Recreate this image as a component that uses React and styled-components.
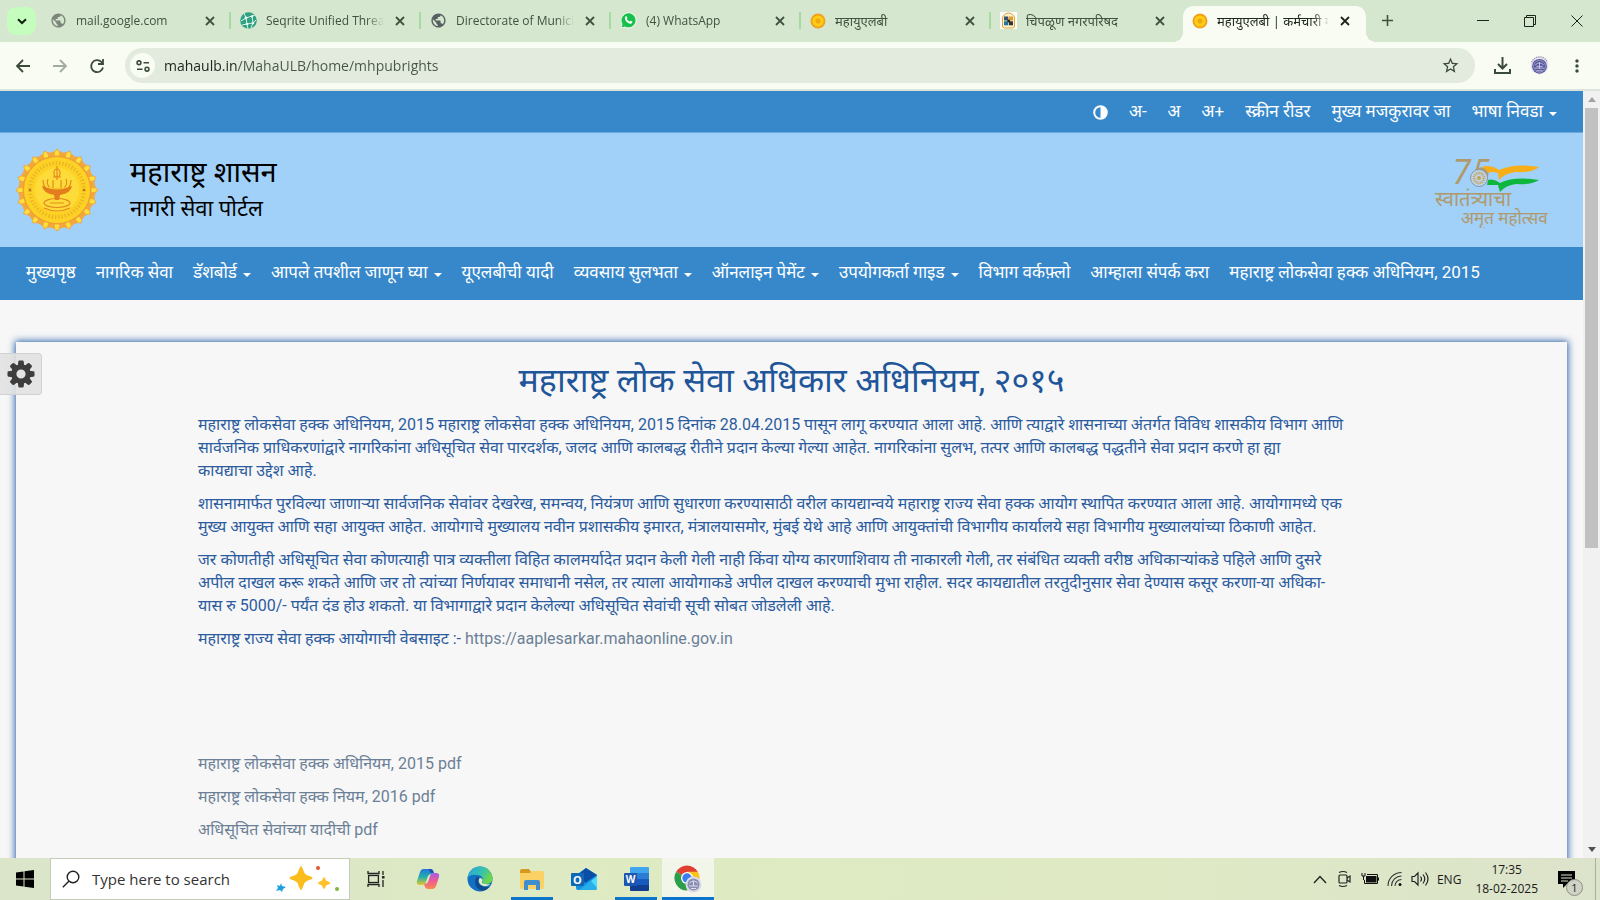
import { MdPublic, MdStarBorder, MdMoreVert, MdAdd } from "react-icons/md";
import styled, { createGlobalStyle, css } from "styled-components";

const GlobalStyle = createGlobalStyle`
  * {
    box-sizing: border-box;
  }
  body {
    margin: 0;
    font-family: Roboto, "Noto Sans Devanagari", "Noto Sans", sans-serif;
  }
  button {
    border: none;
    background: none;
    padding: 0;
    font: inherit;
    color: inherit;
    cursor: pointer;
  }
  a {
    text-decoration: none;
    color: inherit;
  }
  svg {
    display: block;
    flex-shrink: 0;
  }
`;

const uiFont = `"Open Sans", "Noto Sans Devanagari", "Noto Sans", sans-serif`;

const Window = styled.div`
  height: 100vh;
  display: flex;
  flex-direction: column;
  overflow: hidden;
`;

/* ---------- browser ---------- */

const TabStrip = styled.div`
  display: flex;
  align-items: flex-end;
  height: 42px;
  padding-left: 7px;
  background-color: #d5e7cf;
  font-family: ${uiFont};
  color: #43513f;
`;

const TabSearch = styled.button`
  display: flex;
  align-items: center;
  justify-content: center;
  width: 29px;
  height: 28px;
  margin-bottom: 7px;
  border-radius: 9px;
  background-color: #c4fdbe;
  color: #102010;
`;

const TabItem = styled.div`
  flex: 0 1 190px;
  min-width: 0;
  height: 36px;
  display: flex;
  align-items: center;
  gap: 9px;
  padding: 0 14px 7px 9px;
  position: relative;
  ${(props) =>
    !props.$last &&
    css`
      &::after {
        content: "";
        position: absolute;
        right: 0;
        top: 6px;
        width: 2px;
        height: 17px;
        background-color: #a5dba0;
      }
    `}
  ${(props) =>
    props.$active &&
    css`
      flex-basis: 183px;
      margin-left: 2px;
      border-radius: 10px 10px 0 0;
      background-color: #f8fcf3;
      color: #1c241b;
      &::before,
      &::after {
        content: "";
        position: absolute;
        bottom: 0;
        top: auto;
        width: 10px;
        height: 10px;
        background: radial-gradient(circle at 0 0, transparent 10px, #f8fcf3 10px);
      }
      &::before {
        left: -10px;
      }
      &::after {
        right: -10px;
        background: radial-gradient(circle at 100% 0, transparent 10px, #f8fcf3 10px);
      }
    `}
`;

const Tabs = styled.div`
  display: flex;
  flex: 1;
  min-width: 0;
  padding-left: 5px;
`;

const TabTitle = styled.button`
  flex: 1;
  min-width: 0;
  height: 24px;
  font-size: ${(props) => (props.$marathi ? "13px" : "12px")};
  line-height: 24px;
  text-align: left;
  white-space: nowrap;
  overflow: hidden;
  mask-image: linear-gradient(to right, #000 85%, transparent 100%);
`;

const TabClose = styled.button`
  flex-shrink: 0;
  padding: 2px;
`;

const NewTab = styled.button`
  height: 28px;
  margin-left: 12px;
`;

const WindowButtons = styled.div`
  display: flex;
  height: 42px;
  color: #1c241b;
`;

const WindowButton = styled.button`
  width: 47px;
  display: flex;
  align-items: center;
  justify-content: center;
`;

const Toolbar = styled.div`
  display: flex;
  align-items: center;
  height: 49px;
  padding: 0 13px 0 14px;
  background-color: #f8fcf3;
  border-bottom: 2px solid #dce3dc;
  color: #3c4a3a;
`;

const NavButtons = styled.div`
  display: flex;
  gap: 19px;
  margin-right: 19px;
`;

const ToolButton = styled.button`
  opacity: ${(props) => (props.disabled ? 0.45 : 1)};
`;

const AddressBar = styled.div`
  flex: 1;
  display: flex;
  align-items: center;
  gap: 9px;
  height: 35px;
  padding: 0 15px 0 5px;
  border-radius: 18px;
  background-color: #e3ebdf;
`;

const SiteInfo = styled.button`
  display: flex;
  align-items: center;
  justify-content: center;
  width: 25px;
  height: 25px;
  border-radius: 50%;
  background-color: #f8fcf3;
`;

const AddressInput = styled.input`
  flex: 1;
  min-width: 0;
  border: none;
  outline: none;
  padding: 0;
  font-family: ${uiFont};
  font-size: 14px;
  line-height: 24px;
  color: transparent;
  caret-color: #1c241b;
  /* host is darker than the path */
  background: linear-gradient(to right, #1c241b 73px, #485546 73px);
  background-clip: text;
`;

const ToolbarEnd = styled.div`
  display: flex;
  align-items: center;
  gap: 18px;
  margin-left: 18px;
`;

/* ---------- web page ---------- */

const Viewport = styled.div`
  flex: 1;
  min-height: 0;
  display: flex;
`;

const Page = styled.div`
  flex: 1;
  min-width: 0;
  overflow: hidden;
  position: relative;
  background-color: #f7f7f7;
`;

const Scrollbar = styled.div`
  width: 17px;
  display: flex;
  flex-direction: column;
  align-items: center;
  justify-content: space-between;
  background-color: #f1f1f1;
`;

const ScrollArrow = styled.button`
  width: 17px;
  height: 17px;
  display: flex;
  align-items: center;
  justify-content: center;
`;

const ScrollTrack = styled.div`
  flex: 1;
  width: 13px;
`;

const ScrollThumb = styled.div`
  height: 60%;
  background-color: #c1c1c1;
`;

const AccessBar = styled.div`
  display: flex;
  align-items: center;
  justify-content: flex-end;
  gap: 21px;
  height: 42px;
  padding: 2px 26px 0 0;
  background-color: #3788cb;
  border-bottom: 1px solid #6aa9de;
  color: #fff;
  font-size: 17px;
`;

const Header = styled.header`
  display: flex;
  align-items: center;
  height: 114px;
  padding: 0 31px 0 15px;
  background-color: #a1d0f9;
`;

const Brand = styled.div`
  flex: 1;
  margin-left: 31px;
  color: #000;
`;

const BrandTitle = styled.div`
  font-size: 29px;
  line-height: 38px;
`;

const BrandSubtitle = styled.div`
  font-size: 22px;
  line-height: 36px;
`;

const Menu = styled.nav`
  display: flex;
  align-items: center;
  gap: 20px;
  height: 53px;
  padding: 0 26px;
  background-color: #3788cb;
  color: #fff;
  font-size: 17px;
  white-space: nowrap;
`;

const MenuLink = styled.a`
  display: flex;
  align-items: center;
  gap: 6px;
`;

const Caret = styled.span`
  border-top: 4px solid currentColor;
  border-left: 4px solid transparent;
  border-right: 4px solid transparent;
  margin-top: 2px;
`;

const Card = styled.main`
  margin: 42px 16px 0;
  min-height: 100%;
  padding: 14px 182px 0;
  background-color: #f7f7f7;
  box-shadow: 0 0 7px 1px #2a62a8;
`;

const Heading = styled.h1`
  margin: 0 0 9px;
  font-size: 34px;
  font-weight: 400;
  line-height: 48px;
  text-align: center;
  color: #1f5599;
`;

const Paragraph = styled.p`
  margin: 0 0 10px;
  font-size: 16px;
  line-height: 23px;
  color: #2b5c9f;
  white-space: nowrap;
`;

const SiteLink = styled.a`
  color: #6b7f96;
`;

const Downloads = styled.ul`
  list-style: none;
  margin: 102px 0 0;
  padding: 0;
  font-size: 16px;
  line-height: 23px;
  color: #6b7f96;
`;

const Download = styled.li`
  margin-bottom: 10px;
`;

const Settings = styled.button`
  position: absolute;
  left: 0;
  top: 262px;
  display: flex;
  align-items: center;
  justify-content: center;
  width: 42px;
  height: 42px;
  border: 1px solid #d2d2d2;
  border-left: none;
  border-radius: 0 4px 4px 0;
  background-color: rgba(225, 225, 225, 0.9);
  color: #3d3d3d;
`;

/* ---------- taskbar ---------- */

const Taskbar = styled.div`
  display: flex;
  align-items: stretch;
  height: 42px;
  background: linear-gradient(to right, #dae5ca, #deebc2 40%, #dfeac4 70%, #dce3cb);
  font-family: ${uiFont};
  color: #1a1a1a;
`;

const StartButton = styled.button`
  width: 50px;
  display: flex;
  align-items: center;
  justify-content: center;
`;

const SearchBox = styled.label`
  width: 300px;
  display: flex;
  align-items: center;
  gap: 12px;
  padding: 0 8px 0 11px;
  border: 1px solid #c4cbb8;
  background-color: #fff;
`;

const SearchInput = styled.input`
  flex: 1;
  min-width: 0;
  border: none;
  outline: none;
  padding: 0;
  font-family: ${uiFont};
  font-size: 15px;
  &::placeholder {
    color: #333;
    opacity: 1;
  }
`;

const Apps = styled.div`
  display: flex;
  flex: 1;
`;

const AppButton = styled.button`
  position: relative;
  width: 52px;
  display: flex;
  align-items: center;
  justify-content: center;
  background-color: ${(props) => (props.$active ? "#f2f5e9" : "transparent")};
  ${(props) =>
    props.$open &&
    css`
      &::after {
        content: "";
        position: absolute;
        left: ${props.$active ? "0" : "5px"};
        right: ${props.$active ? "0" : "5px"};
        bottom: 0;
        height: 3px;
        background-color: #0b74cc;
      }
    `}
`;

const Tray = styled.div`
  display: flex;
  align-items: center;
  gap: 8px;
  font-size: 12px;
`;

const TrayButton = styled.button`
  line-height: 19px;
  text-align: center;
`;

const Clock = styled(TrayButton)`
  margin: 0 12px 0 6px;
`;

const Notifications = styled(TrayButton)`
  position: relative;
  margin-right: 12px;
`;

const Badge = styled.span`
  position: absolute;
  left: 8px;
  top: 8px;
  width: 17px;
  height: 17px;
  border: 1px solid #8a8f80;
  border-radius: 50%;
  background-color: #cfd3c5;
  font-size: 11px;
  line-height: 15px;
`;

const ShowDesktop = styled.div`
  align-self: stretch;
  width: 5px;
  border-left: 1px solid #a9b09b;
`;

/* ---------- drawings ---------- */

const Seqrite = () => (
  <svg width="17" height="17" viewBox="0 0 17 17">
    <circle cx="8.5" cy="8.5" r="8.3" fill="#2ea183" />
    <g stroke="#d8f0e4" strokeWidth="1" fill="none">
      <path d="M4 1 6 6 1 9M6 6l6-2 3-1M6 6l1 6 6-1 3-3M12 4l1 7-2 5M7 12l-5 1M7 12l1 5" />
    </g>
    <g fill="#e8f8f0">
      <circle cx="6" cy="6" r="1.4" />
      <circle cx="12" cy="4.4" r="1.2" />
      <circle cx="7" cy="12" r="1.3" />
      <circle cx="13" cy="11" r="1.3" />
    </g>
  </svg>
);

const WhatsApp = () => (
  <svg width="17" height="17" viewBox="0 0 17 17">
    <path d="M0.5 16.5 1.7 12.4A8 8 0 1 1 4.7 15.4Z" fill="#edf9ea" />
    <path d="M1.7 15.3 2.6 12.1A7 7 0 1 1 5 14.4Z" fill="#17bf4b" />
    <path
      d="M5.5 4.6c.7-.8 1.3-.4 1.5.3l.4 1c.1.4-.6.8-.6 1.1.6 1.2 1.5 2 2.8 2.6.4 0 .7-.9 1.1-.8l1.5.8c.4.4 0 1.4-.7 1.8-1.2.7-3 .1-4.6-1.3-1.7-1.5-2.6-3.9-1.4-5.5Z"
      fill="#fff"
    />
  </svg>
);

const Coin = () => (
  <svg width="16" height="16" viewBox="0 0 16 16">
    <circle cx="8" cy="8" r="7.5" fill="#f3a21f" />
    <circle cx="8" cy="8" r="5.6" fill="#fdcd12" />
    <circle cx="8" cy="8" r="2.5" fill="#f2a616" />
  </svg>
);

const Council = () => (
  <svg width="17" height="17" viewBox="0 0 17 17">
    <rect width="17" height="17" fill="#fdfcf8" />
    <path d="M2.5 15V6Q3 2 8.5 1 14 2 14.5 6v9l-2 1h-8Z" fill="#fff3cf" stroke="#e2a13a" />
    <rect x="4" y="4.5" width="4.3" height="4" fill="#35506d" />
    <rect x="9" y="4.5" width="4" height="4" fill="#e09a28" />
    <rect x="4" y="9.3" width="4.3" height="4" fill="#1d74a0" />
    <rect x="9" y="9.3" width="4" height="4" fill="#33382f" />
    <circle cx="8.7" cy="9" r="1.5" fill="#2a2418" />
  </svg>
);

const Seal = ({ size }) => (
  <svg width={size} height={size} viewBox="0 0 18 18">
    <circle cx="9" cy="9" r="8.5" fill="#e4e4f0" />
    <path d="M1.5 6a8 8 0 0 1 15 0" fill="none" stroke="#9a8fb4" strokeWidth="1.2" strokeDasharray="1.2 .9" />
    <circle cx="9" cy="9.8" r="7" fill="#54549a" />
    <circle cx="9" cy="9.8" r="5.6" fill="none" stroke="#a9a9d0" strokeWidth=".7" />
    <path d="M5 8.5q4-4 8 0M4.5 11.5h9M6 14h6M9 6v6M6 9.8h6" stroke="#d6d6ec" fill="none" strokeWidth=".8" />
  </svg>
);

const Contrast = () => (
  <svg width="15" height="15" viewBox="0 0 15 15">
    <circle cx="7.5" cy="7.5" r="6.3" fill="none" stroke="#fff" strokeWidth="2" />
    <path d="M7.5 1.5a6 6 0 0 1 0 12Z" fill="#fff" />
  </svg>
);

const Gear = () => (
  <svg width="28" height="28" viewBox="0 0 28 28">
    {Array.from({ length: 8 }, (_, i) => (
      <path
        key={i}
        d="M10.8 6 11.3 1.5Q11.4.5 12.4.5H15.6Q16.6.5 16.7 1.5L17.2 6Z"
        fill="currentColor"
        transform={`rotate(${i * 45} 14 14)`}
      />
    ))}
    <circle cx="14" cy="14" r="7.2" fill="none" stroke="currentColor" strokeWidth="5.2" />
  </svg>
);

const Emblem = () => (
  <svg width="84" height="84" viewBox="0 0 84 84" role="img" aria-label="महाराष्ट्र शासन">
    {Array.from({ length: 20 }, (_, i) => (
      <g key={i} transform={`rotate(${i * 18} 42 42)`}>
        <path d="M35 8Q35 3.5 39 3.5L42 .5 45 3.5Q49 3.5 49 8V14H35Z" fill="#f2a83c" />
        <ellipse cx="42" cy="5.8" rx="2.1" ry="3.6" fill="#fde03c" />
      </g>
    ))}
    <circle cx="42" cy="42" r="34.5" fill="#f0a035" />
    <circle cx="42" cy="42" r="33" fill="#fdd224" />
    <circle cx="42" cy="42" r="27" fill="none" stroke="#dfa02a" strokeWidth="4" strokeDasharray="1.5 1.8" opacity=".55" />
    <circle cx="42" cy="42" r="22" fill="#fddc3a" />
    <circle cx="15" cy="42" r="1.3" fill="#b9791b" />
    <circle cx="69" cy="42" r="1.3" fill="#b9791b" />
    <g fill="none" stroke="#e58a22" strokeWidth="1.2">
      <ellipse cx="42" cy="25" rx="3" ry="4" />
      <path d="M42 18v14M38 29h8" />
      <path d="M28 32q0 6 4 9M56 32q0 6-4 9M33 31q-2 5 2 9M51 31q2 5-2 9M38 32v8M46 32v8" />
      <ellipse cx="42" cy="55" rx="13" ry="4.5" />
      <path d="M29 60q13 6 26 0M35 55h14" />
    </g>
    <path d="M27 38Q42 43 57 38 56 45 45 47L44 52H40L39 47Q28 45 27 38Z" fill="#e37d1d" />
    <path d="M31 39Q42 43 53 39" stroke="#fdd224" fill="none" />
  </svg>
);

const AmritLogo = () => (
  <svg width="118" height="76" viewBox="0 0 118 76" role="img" aria-label="स्वातंत्र्याचा अमृत महोत्सव">
    <g fill="#b09a6b" fontFamily='"Noto Sans Devanagari", "Noto Sans", sans-serif'>
      <text x="18" y="32" fontSize="34" fontStyle="italic" fontFamily="Lato, sans-serif">
        75
      </text>
      <text x="1" y="54" fontSize="20">
        स्वातंत्र्याचा
      </text>
      <text x="27" y="72" fontSize="17">
        अमृत महोत्सव
      </text>
    </g>
    <circle cx="45" cy="26" r="8.5" fill="#bcd3e8" stroke="#8a98a8" />
    <circle cx="45" cy="26" r="5" fill="none" stroke="#c9a24f" strokeWidth="2.5" strokeDasharray="1 .8" />
    <circle cx="45" cy="26" r="2" fill="#c9a24f" />
    <path d="M48 15Q56 12 65 18 82 11 105 15 98 21 82 20 71 21 65 28L64 21Q58 19 54 21 52 17 48 15Z" fill="#f7ae17" />
    <path d="M54 28Q60 26 66 31 80 24 105 28 98 33 82 32 72 33 66 40L64 33H53Z" fill="#0eb63e" />
  </svg>
);

const Sparkles = () => (
  <svg width="66" height="28" viewBox="0 0 66 28">
    <path
      d="M26 1Q27 1 29 7 30 10 36 11.5 39 13 36 14.5 30 16 29 19 27 25 26 25T23 19Q22 16 16 14.5 13 13 16 11.5 22 10 23 7 25 1 26 1Z"
      fill="#fbbd1b"
    />
    <path
      d="M49 12Q50 12 51 15.5 55 17 55.5 18 55 19 51 20.5 50 24 49 24T47 20.5Q43 19 43 18T47 15.5Q48 12 49 12Z"
      fill="#fcc12b"
    />
    <path d="M6 18l1 3 4 1-3 2-1 3-2-2-4 1 2-3-1-3 3 1Z" fill="#1ba1e2" />
    <circle cx="43" cy="3" r="2" fill="#e4572e" />
    <circle cx="62" cy="24" r="2" fill="#7cb93e" />
  </svg>
);

const TaskView = () => (
  <svg width="19" height="18" viewBox="0 0 19 18" fill="none" stroke="#222" strokeWidth="1.3">
    <path d="M1 1v2.5h11V1M1 17v-2.5h11V17" />
    <rect x="1.6" y="5.5" width="9.8" height="7" />
    <path d="M16 1v4M16 10v7" />
    <rect x="15" y="6" width="2.5" height="2.5" fill="#222" stroke="none" />
  </svg>
);

const Copilot = () => (
  <svg width="24" height="24" viewBox="0 0 24 24">
    <defs>
      <linearGradient id="cpA" x1="0" y1="0" x2="0" y2="1">
        <stop offset="0" stopColor="#2276d9" />
        <stop offset=".5" stopColor="#22b0a8" />
        <stop offset="1" stopColor="#e9c62a" />
      </linearGradient>
      <linearGradient id="cpB" x1="0" y1="0" x2="0" y2="1">
        <stop offset="0" stopColor="#a25be6" />
        <stop offset=".5" stopColor="#ee5d92" />
        <stop offset="1" stopColor="#f78a4a" />
      </linearGradient>
    </defs>
    <path d="M16 7 15 4Q14 2 12 2H7Q5 2 4 5L1 14Q0 18 4 18H7Q9 18 10 15L12 9Q13 7 16 7Z" fill="url(#cpA)" />
    <path d="M12 2h3q2 0 3 4H15Z" fill="#1d4fb8" />
    <path d="M8 17l1 3q1 2 3 2h5q2 0 3-3l3-9Q24 6 20 6H17Q15 6 14 9l-2 6Q11 17 8 17Z" fill="url(#cpB)" />
  </svg>
);

const Edge = () => (
  <svg width="26" height="26" viewBox="0 0 26 26">
    <defs>
      <linearGradient id="edA" x1="0" y1="0" x2="1" y2=".4">
        <stop offset="0" stopColor="#2aa6e0" />
        <stop offset=".6" stopColor="#35c1b0" />
        <stop offset="1" stopColor="#6fd64b" />
      </linearGradient>
    </defs>
    <circle cx="13" cy="13" r="12.5" fill="#1270c2" />
    <path d="M.6 12A12.5 12.5 0 0 1 25.5 12Q25.5 18 19 18 14 18 15.5 15 17 10 11 9 3 8 .6 12Z" fill="url(#edA)" />
    <path d="M9 12Q6 20 13 24 18 26 22.5 21 14 22 11.5 17 10.5 14 12.5 11.5 10 10.5 9 12Z" fill="#114a8b" />
    <path d="M12.5 12Q10.5 16 14 19 18 21.5 23.5 18.5 20 18.5 16 17.5 14 16.5 15.5 15 16 12 12.5 12Z" fill="#e3ecc9" />
  </svg>
);

const Explorer = () => (
  <svg width="24" height="21" viewBox="0 0 24 21">
    <path d="M0 2Q0 0 2 0h7l2 3v4H0Z" fill="#d39a1e" />
    <path d="M0 4h10l2-2h10q2 0 2 2v14q0 2-2 2H2q-2 0-2-2Z" fill="#fbd064" />
    <path d="M4 21v-8q0-2 2-2h12q2 0 2 2v8h-4v-5H8v5Z" fill="#3f8fd0" />
  </svg>
);

const Outlook = () => (
  <svg width="26" height="24" viewBox="0 0 26 24">
    <path d="M5 8 15 1 26 8v13q0 2-2 2H7q-2 0-2-2Z" fill="#1490df" />
    <path d="M9 6 15 1l11 7-12 8Z" fill="#0a4fa3" />
    <path d="M26 9v12q0 2-2 2H9Z" fill="#50d9ff" />
    <path d="M8 23 20 14l6 7q0 2-2 2Z" fill="#28afea" />
    <rect y="6" width="13" height="13" rx="1" fill="#0f67b8" />
    <text x="6.5" y="16.5" fontSize="11" fontWeight="700" fill="#fff" textAnchor="middle">
      O
    </text>
  </svg>
);

const Word = () => (
  <svg width="25" height="24" viewBox="0 0 25 24">
    <path d="M6 1Q6 0 7 0h17q1 0 1 1v5H6Z" fill="#41a5ee" />
    <path d="M6 6h19v6H6Z" fill="#2b7cd3" />
    <path d="M6 12h19v6H6Z" fill="#185abd" />
    <path d="M6 18h19v5q0 1-1 1H7q-1 0-1-1Z" fill="#103f91" />
    <rect y="6" width="13" height="13" rx="1" fill="#1b56b0" />
    <text x="6.5" y="16" fontSize="10" fontWeight="700" fill="#fff" textAnchor="middle">
      W
    </text>
  </svg>
);

const Chrome = () => (
  <svg width="28" height="28" viewBox="0 0 28 28">
    <path d="M13 13 2.2 6.7A12.5 12.5 0 0 1 23.8 6.7Z" fill="#e0402f" />
    <path d="M13 13 2.2 6.7A12.5 12.5 0 0 0 13 25.5Z" fill="#2b9e4a" />
    <path d="M13 13V25.5A12.5 12.5 0 0 0 23.8 6.7H13Z" fill="#fbc21c" />
    <circle cx="13" cy="13" r="6" fill="#fff" />
    <circle cx="13" cy="13" r="4.7" fill="#3b7ded" />
    <circle cx="19.5" cy="19.5" r="8" fill="#d9dae6" />
    <circle cx="19.5" cy="19.5" r="6" fill="#8a8db4" />
    <path d="M15.5 18q4-4 8 0M15 21h9M17 23.5h5M19.5 16v5" stroke="#dddfee" fill="none" />
  </svg>
);

const tabs = [
  { title: "mail.google.com", icon: <MdPublic size={17} color="#7d857b" /> },
  { title: "Seqrite Unified Threat", icon: <Seqrite /> },
  { title: "Directorate of Municipal", icon: <MdPublic size={17} color="#585f62" /> },
  { title: "(4) WhatsApp", icon: <WhatsApp /> },
  { title: "महायुएलबी", marathi: true, icon: <Coin /> },
  { title: "चिपळूण नगरपरिषद", marathi: true, icon: <Council />, last: true },
  { title: "महायुएलबी | कर्मचारी माहिती", marathi: true, icon: <Coin />, active: true, last: true },
];

const menu = [
  { label: "मुख्यपृष्ठ" },
  { label: "नागरिक सेवा" },
  { label: "डॅशबोर्ड", caret: true },
  { label: "आपले तपशील जाणून घ्या", caret: true },
  { label: "यूएलबीची यादी" },
  { label: "व्यवसाय सुलभता", caret: true },
  { label: "ऑनलाइन पेमेंट", caret: true },
  { label: "उपयोगकर्ता गाइड", caret: true },
  { label: "विभाग वर्कफ़्लो" },
  { label: "आम्हाला संपर्क करा" },
  { label: "महाराष्ट्र लोकसेवा हक्क अधिनियम, 2015" },
];

const downloads = [
  "महाराष्ट्र लोकसेवा हक्क अधिनियम, 2015 pdf",
  "महाराष्ट्र लोकसेवा हक्क नियम, 2016 pdf",
  "अधिसूचित सेवांच्या यादीची pdf",
];

const Browser = () => (
  <>
    <TabStrip>
      <TabSearch aria-label="Search tabs">
        <svg width="10" height="7" viewBox="0 0 10 7">
          <path d="M1 1.2 5 5 9 1.2" fill="none" stroke="currentColor" strokeWidth="2" />
        </svg>
      </TabSearch>
      <Tabs>
        {tabs.map((tab, i) => (
          <TabItem key={i} $active={tab.active} $last={tab.last}>
            {tab.icon}
            <TabTitle $marathi={tab.marathi}>{tab.title}</TabTitle>
            <TabClose aria-label="Close tab">
              <svg width="10" height="10" viewBox="0 0 10 10">
                <path d="M1 1l8 8M9 1L1 9" stroke="currentColor" strokeWidth="1.8" />
              </svg>
            </TabClose>
          </TabItem>
        ))}
        <NewTab aria-label="New tab">
          <MdAdd size={19} />
        </NewTab>
      </Tabs>
      <WindowButtons>
        <WindowButton aria-label="Minimize">
          <svg width="12" height="12" viewBox="0 0 12 12">
            <path d="M0 5.5h12" stroke="currentColor" />
          </svg>
        </WindowButton>
        <WindowButton aria-label="Restore">
          <svg width="12" height="12" viewBox="0 0 12 12" fill="none" stroke="currentColor">
            <path d="M.5 2.5h9v9h-9ZM2.5 2.5v-2h9v9h-2" />
          </svg>
        </WindowButton>
        <WindowButton aria-label="Close">
          <svg width="12" height="12" viewBox="0 0 12 12">
            <path d="M.5.5l11 11M11.5.5l-11 11" stroke="currentColor" />
          </svg>
        </WindowButton>
      </WindowButtons>
    </TabStrip>
    <Toolbar>
      <NavButtons>
        <ToolButton aria-label="Back">
          <svg width="18" height="18" viewBox="0 0 18 18">
            <path d="M9 3 3 9l6 6M3 9h13" fill="none" stroke="currentColor" strokeWidth="1.8" />
          </svg>
        </ToolButton>
        <ToolButton aria-label="Forward" disabled>
          <svg width="18" height="18" viewBox="0 0 18 18">
            <path d="M9 3l6 6-6 6M15 9H2" fill="none" stroke="currentColor" strokeWidth="1.8" />
          </svg>
        </ToolButton>
        <ToolButton aria-label="Reload">
          <svg width="18" height="18" viewBox="0 0 18 18">
            <path d="M15 10.5A6 6 0 1 1 13.5 5L15 6.5M15 2v5h-5" fill="none" stroke="currentColor" strokeWidth="1.8" />
          </svg>
        </ToolButton>
      </NavButtons>
      <AddressBar>
        <SiteInfo aria-label="View site information">
          <svg width="14" height="12" viewBox="0 0 14 12" fill="none" stroke="currentColor" strokeWidth="1.6">
            <circle cx="3" cy="2.8" r="1.9" />
            <path d="M7.5 2.8H13M1 9.2h5.5" />
            <circle cx="11" cy="9.2" r="1.9" />
          </svg>
        </SiteInfo>
        <AddressInput aria-label="Address" defaultValue="mahaulb.in/MahaULB/home/mhpubrights" />
        <ToolButton aria-label="Bookmark this page">
          <MdStarBorder size={19} />
        </ToolButton>
      </AddressBar>
      <ToolbarEnd>
        <ToolButton aria-label="Downloads">
          <svg width="19" height="19" viewBox="0 0 19 19" fill="none" stroke="currentColor" strokeWidth="2">
            <path d="M9.5 1v11M5 8l4.5 4.5L14 8M2 13v4h15v-4" />
          </svg>
        </ToolButton>
        <ToolButton aria-label="Profile">
          <Seal size={19} />
        </ToolButton>
        <ToolButton aria-label="Menu">
          <MdMoreVert size={20} />
        </ToolButton>
      </ToolbarEnd>
    </Toolbar>
  </>
);

const Site = () => (
  <Page>
    <AccessBar>
      <button aria-label="Contrast">
        <Contrast />
      </button>
      <button>अ-</button>
      <button>अ</button>
      <button>अ+</button>
      <a href="#reader">स्क्रीन रीडर</a>
      <a href="#main">मुख्य मजकुरावर जा</a>
      <MenuLink href="#language">
        भाषा निवडा <Caret />
      </MenuLink>
    </AccessBar>
    <Header>
      <Emblem />
      <Brand>
        <BrandTitle>महाराष्ट्र शासन</BrandTitle>
        <BrandSubtitle>नागरी सेवा पोर्टल</BrandSubtitle>
      </Brand>
      <AmritLogo />
    </Header>
    <Menu>
      {menu.map((item) => (
        <MenuLink href="#menu" key={item.label}>
          {item.label}
          {item.caret && <Caret />}
        </MenuLink>
      ))}
    </Menu>
    <Card id="main">
      <Heading>महाराष्ट्र लोक सेवा अधिकार अधिनियम, २०१५</Heading>
      <Paragraph>
        महाराष्ट्र लोकसेवा हक्क अधिनियम, 2015 महाराष्ट्र लोकसेवा हक्क अधिनियम, 2015 दिनांक 28.04.2015 पासून लागू
        करण्यात आला आहे. आणि त्याद्वारे शासनाच्या अंतर्गत विविध शासकीय विभाग आणि
        <br />
        सार्वजनिक प्राधिकरणांद्वारे नागरिकांना अधिसूचित सेवा पारदर्शक, जलद आणि कालबद्ध रीतीने प्रदान केल्या गेल्या
        आहेत. नागरिकांना सुलभ, तत्पर आणि कालबद्ध पद्धतीने सेवा प्रदान करणे हा ह्या
        <br />
        कायद्याचा उद्देश आहे.
      </Paragraph>
      <Paragraph>
        शासनामार्फत पुरविल्या जाणाऱ्या सार्वजनिक सेवांवर देखरेख, समन्वय, नियंत्रण आणि सुधारणा करण्यासाठी वरील
        कायद्यान्वये महाराष्ट्र राज्य सेवा हक्क आयोग स्थापित करण्यात आला आहे. आयोगामध्ये एक
        <br />
        मुख्य आयुक्त आणि सहा आयुक्त आहेत. आयोगाचे मुख्यालय नवीन प्रशासकीय इमारत, मंत्रालयासमोर, मुंबई येथे आहे आणि
        आयुक्तांची विभागीय कार्यालये सहा विभागीय मुख्यालयांच्या ठिकाणी आहेत.
      </Paragraph>
      <Paragraph>
        जर कोणतीही अधिसूचित सेवा कोणत्याही पात्र व्यक्तीला विहित कालमर्यादेत प्रदान केली गेली नाही किंवा योग्य
        कारणाशिवाय ती नाकारली गेली, तर संबंधित व्यक्ती वरीष्ठ अधिकाऱ्यांकडे पहिले आणि दुसरे
        <br />
        अपील दाखल करू शकते आणि जर तो त्यांच्या निर्णयावर समाधानी नसेल, तर त्याला आयोगाकडे अपील दाखल करण्याची मुभा
        राहील. सदर कायद्यातील तरतुदीनुसार सेवा देण्यास कसूर करणा-या अधिका-
        <br />
        यास रु 5000/- पर्यंत दंड होउ शकतो. या विभागाद्वारे प्रदान केलेल्या अधिसूचित सेवांची सूची सोबत जोडलेली आहे.
      </Paragraph>
      <Paragraph>
        महाराष्ट्र राज्य सेवा हक्क आयोगाची वेबसाइट :-{" "}
        <SiteLink href="#website">https://aaplesarkar.mahaonline.gov.in</SiteLink>
      </Paragraph>
      <Downloads>
        {downloads.map((name) => (
          <Download key={name}>
            <a href="#pdf">{name}</a>
          </Download>
        ))}
      </Downloads>
    </Card>
    <Settings aria-label="Settings">
      <Gear />
    </Settings>
  </Page>
);

const BottomBar = () => (
  <Taskbar>
    <StartButton aria-label="Start">
      <svg width="18" height="18" viewBox="0 0 18 18">
        <path d="M0 2.6 7.5 1.5V8.5H0ZM8.5 1.3 18 0V8.5H8.5ZM0 9.5H7.5V16.5L0 15.4ZM8.5 9.5H18V18L8.5 16.7Z" />
      </svg>
    </StartButton>
    <SearchBox>
      <svg width="18" height="18" viewBox="0 0 18 18" fill="none" stroke="#222" strokeWidth="1.4">
        <circle cx="11" cy="7" r="5.8" />
        <path d="M6.8 11.2.8 17.2" />
      </svg>
      <SearchInput aria-label="Search" placeholder="Type here to search" />
      <Sparkles />
    </SearchBox>
    <Apps>
      <AppButton aria-label="Task view">
        <TaskView />
      </AppButton>
      <AppButton aria-label="Copilot">
        <Copilot />
      </AppButton>
      <AppButton aria-label="Edge">
        <Edge />
      </AppButton>
      <AppButton aria-label="File Explorer" $open>
        <Explorer />
      </AppButton>
      <AppButton aria-label="Outlook">
        <Outlook />
      </AppButton>
      <AppButton aria-label="Word" $open>
        <Word />
      </AppButton>
      <AppButton aria-label="Chrome" $open $active>
        <Chrome />
      </AppButton>
    </Apps>
    <Tray>
      <TrayButton aria-label="Show hidden icons">
        <svg width="14" height="9" viewBox="0 0 14 9">
          <path d="M1 8 7 1.5 13 8" fill="none" stroke="#222" strokeWidth="1.3" />
        </svg>
      </TrayButton>
      <TrayButton aria-label="Meet now">
        <svg width="18" height="18" viewBox="0 0 18 18" fill="none" stroke="#222" strokeWidth="1.2">
          <rect x="4" y="5" width="8" height="8" rx="1" />
          <path d="M12 8l3-2v6l-3-2M4 2.5q4-2 8 0M4 15.5q4 2 8 0" />
        </svg>
      </TrayButton>
      <TrayButton aria-label="Battery">
        <svg width="18" height="14" viewBox="0 0 18 14">
          <rect x="5" y="4" width="10.5" height="6.5" fill="#111" />
          <path d="M6 2.5h10.5v9H3.5V8M17.5 5.5v3M1 1v3h3V1M2.5 4v4" fill="none" stroke="#111" />
        </svg>
      </TrayButton>
      <TrayButton aria-label="Network">
        <svg width="16" height="16" viewBox="0 0 16 16" fill="none" stroke="#333" strokeWidth="1.1">
          <path d="M1 15A13.5 13.5 0 0 1 14.5 1.5M4.5 15A10 10 0 0 1 14.5 5M8 15A6.5 6.5 0 0 1 14.5 8.5" />
          <circle cx="13" cy="13.5" r="1.5" fill="#111" stroke="none" />
        </svg>
      </TrayButton>
      <TrayButton aria-label="Volume">
        <svg width="18" height="16" viewBox="0 0 18 16" fill="none" stroke="#222" strokeWidth="1.2">
          <path d="M1 5.5h2.5L7 2v12l-3.5-3.5H1ZM9.5 5.5q2 2.5 0 5M12 3.5q3.5 4.5 0 9M14.5 1.5q5 6.5 0 13" />
        </svg>
      </TrayButton>
      <TrayButton>ENG</TrayButton>
      <Clock>
        17:35
        <br />
        18-02-2025
      </Clock>
      <Notifications aria-label="Notifications">
        <svg width="17" height="17" viewBox="0 0 17 17">
          <path d="M0 0h17v13H9l-4 4v-4H0Z" fill="#000" />
          <path d="M3 4h11M3 7h11M3 10h7" stroke="#dfe6cd" />
        </svg>
        <Badge>1</Badge>
      </Notifications>
      <ShowDesktop />
    </Tray>
  </Taskbar>
);

const App = () => (
  <Window>
    <GlobalStyle />
    <Browser />
    <Viewport>
      <Site />
      <Scrollbar>
        <ScrollArrow aria-label="Scroll up">
          <svg width="8" height="5" viewBox="0 0 8 5">
            <path d="M4 0 8 5H0Z" fill="#a3a3a3" />
          </svg>
        </ScrollArrow>
        <ScrollTrack>
          <ScrollThumb />
        </ScrollTrack>
        <ScrollArrow aria-label="Scroll down">
          <svg width="8" height="5" viewBox="0 0 8 5">
            <path d="M0 0H8L4 5Z" fill="#505050" />
          </svg>
        </ScrollArrow>
      </Scrollbar>
    </Viewport>
    <BottomBar />
  </Window>
);

export default App;
